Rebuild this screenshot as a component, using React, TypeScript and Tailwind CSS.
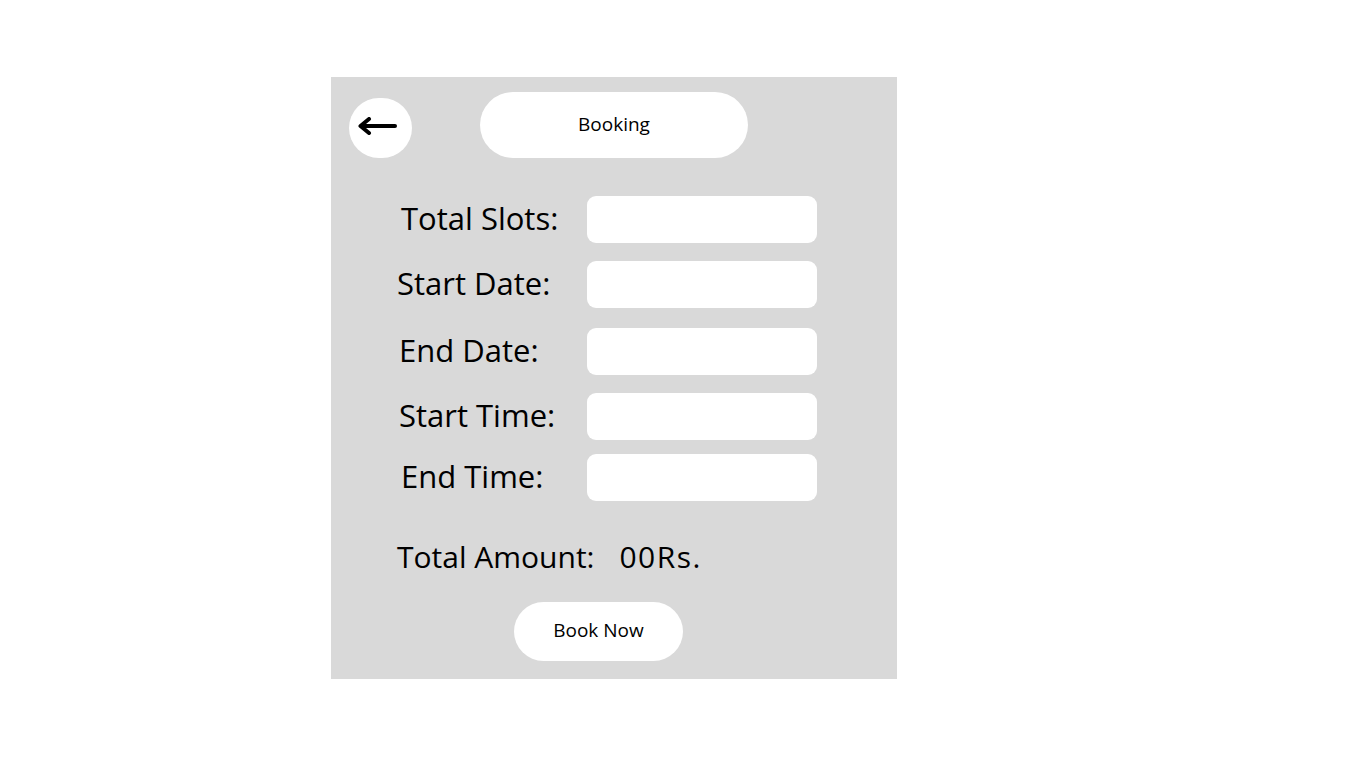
import React from "react";

const fields = [
  { label: "Total Slots:", mt: "mt-[38px]", pl: "pl-[70px]" },
  { label: "Start Date:", mt: "mt-[18px]", pl: "pl-[66px]" },
  { label: "End Date:", mt: "mt-[20px]", pl: "pl-[68px]" },
  { label: "Start Time:", mt: "mt-[18px]", pl: "pl-[68px]" },
  { label: "End Time:", mt: "mt-[14px]", pl: "pl-[70px]" },
];

function BackArrow() {
  return (
    <svg width="40" height="18" viewBox="0 0 40 18" fill="none">
      <path d="M38 9H5" stroke="#000" strokeWidth="4" strokeLinecap="round" />
      <path
        d="M12 2L3.5 9L12 16"
        stroke="#000"
        strokeWidth="4"
        strokeLinecap="round"
        strokeLinejoin="round"
      />
    </svg>
  );
}

export default function App() {
  return (
    <div
      className="min-h-screen bg-white pl-[331px] pt-[77px] text-black"
      style={{ fontFamily: '"Open Sans", "Noto Sans", sans-serif' }}
    >
      <div className="flex h-[602px] w-[566px] flex-col bg-[#d9d9d9]">
        {/* header */}
        <div className="flex items-start pt-[15px]">
          <button className="ml-[18px] mt-[6px] flex h-[60px] w-[63px] items-center justify-start rounded-full bg-white pb-[5px] pl-[8px]">
            <BackArrow />
          </button>
          <div className="ml-[68px] flex h-[66px] w-[268px] items-center justify-center rounded-full bg-white pb-[2px] text-[19px]">
            Booking
          </div>
        </div>

        {/* form */}
        {fields.map((f) => (
          <div key={f.label} className={`flex items-center ${f.mt}`}>
            <div className={`w-[256px] pb-[2px] text-[31px] leading-none ${f.pl}`}>
              {f.label}
            </div>
            <div className="h-[47px] w-[230px] rounded-[9px] bg-white" />
          </div>
        ))}

        <div className="mt-[37px] flex h-[40px] items-center pb-[2px] pl-[66px] text-[30px] leading-none">
          <span>Total Amount:</span>
          <span className="ml-[25px] tracking-[1.5px]">00Rs.</span>
        </div>

        <div className="mt-[24px] flex pl-[183px]">
          <button className="flex h-[59px] w-[169px] items-center justify-center rounded-full bg-white pb-[2px] text-[19px]">
            Book Now
          </button>
        </div>
      </div>
    </div>
  );
}
